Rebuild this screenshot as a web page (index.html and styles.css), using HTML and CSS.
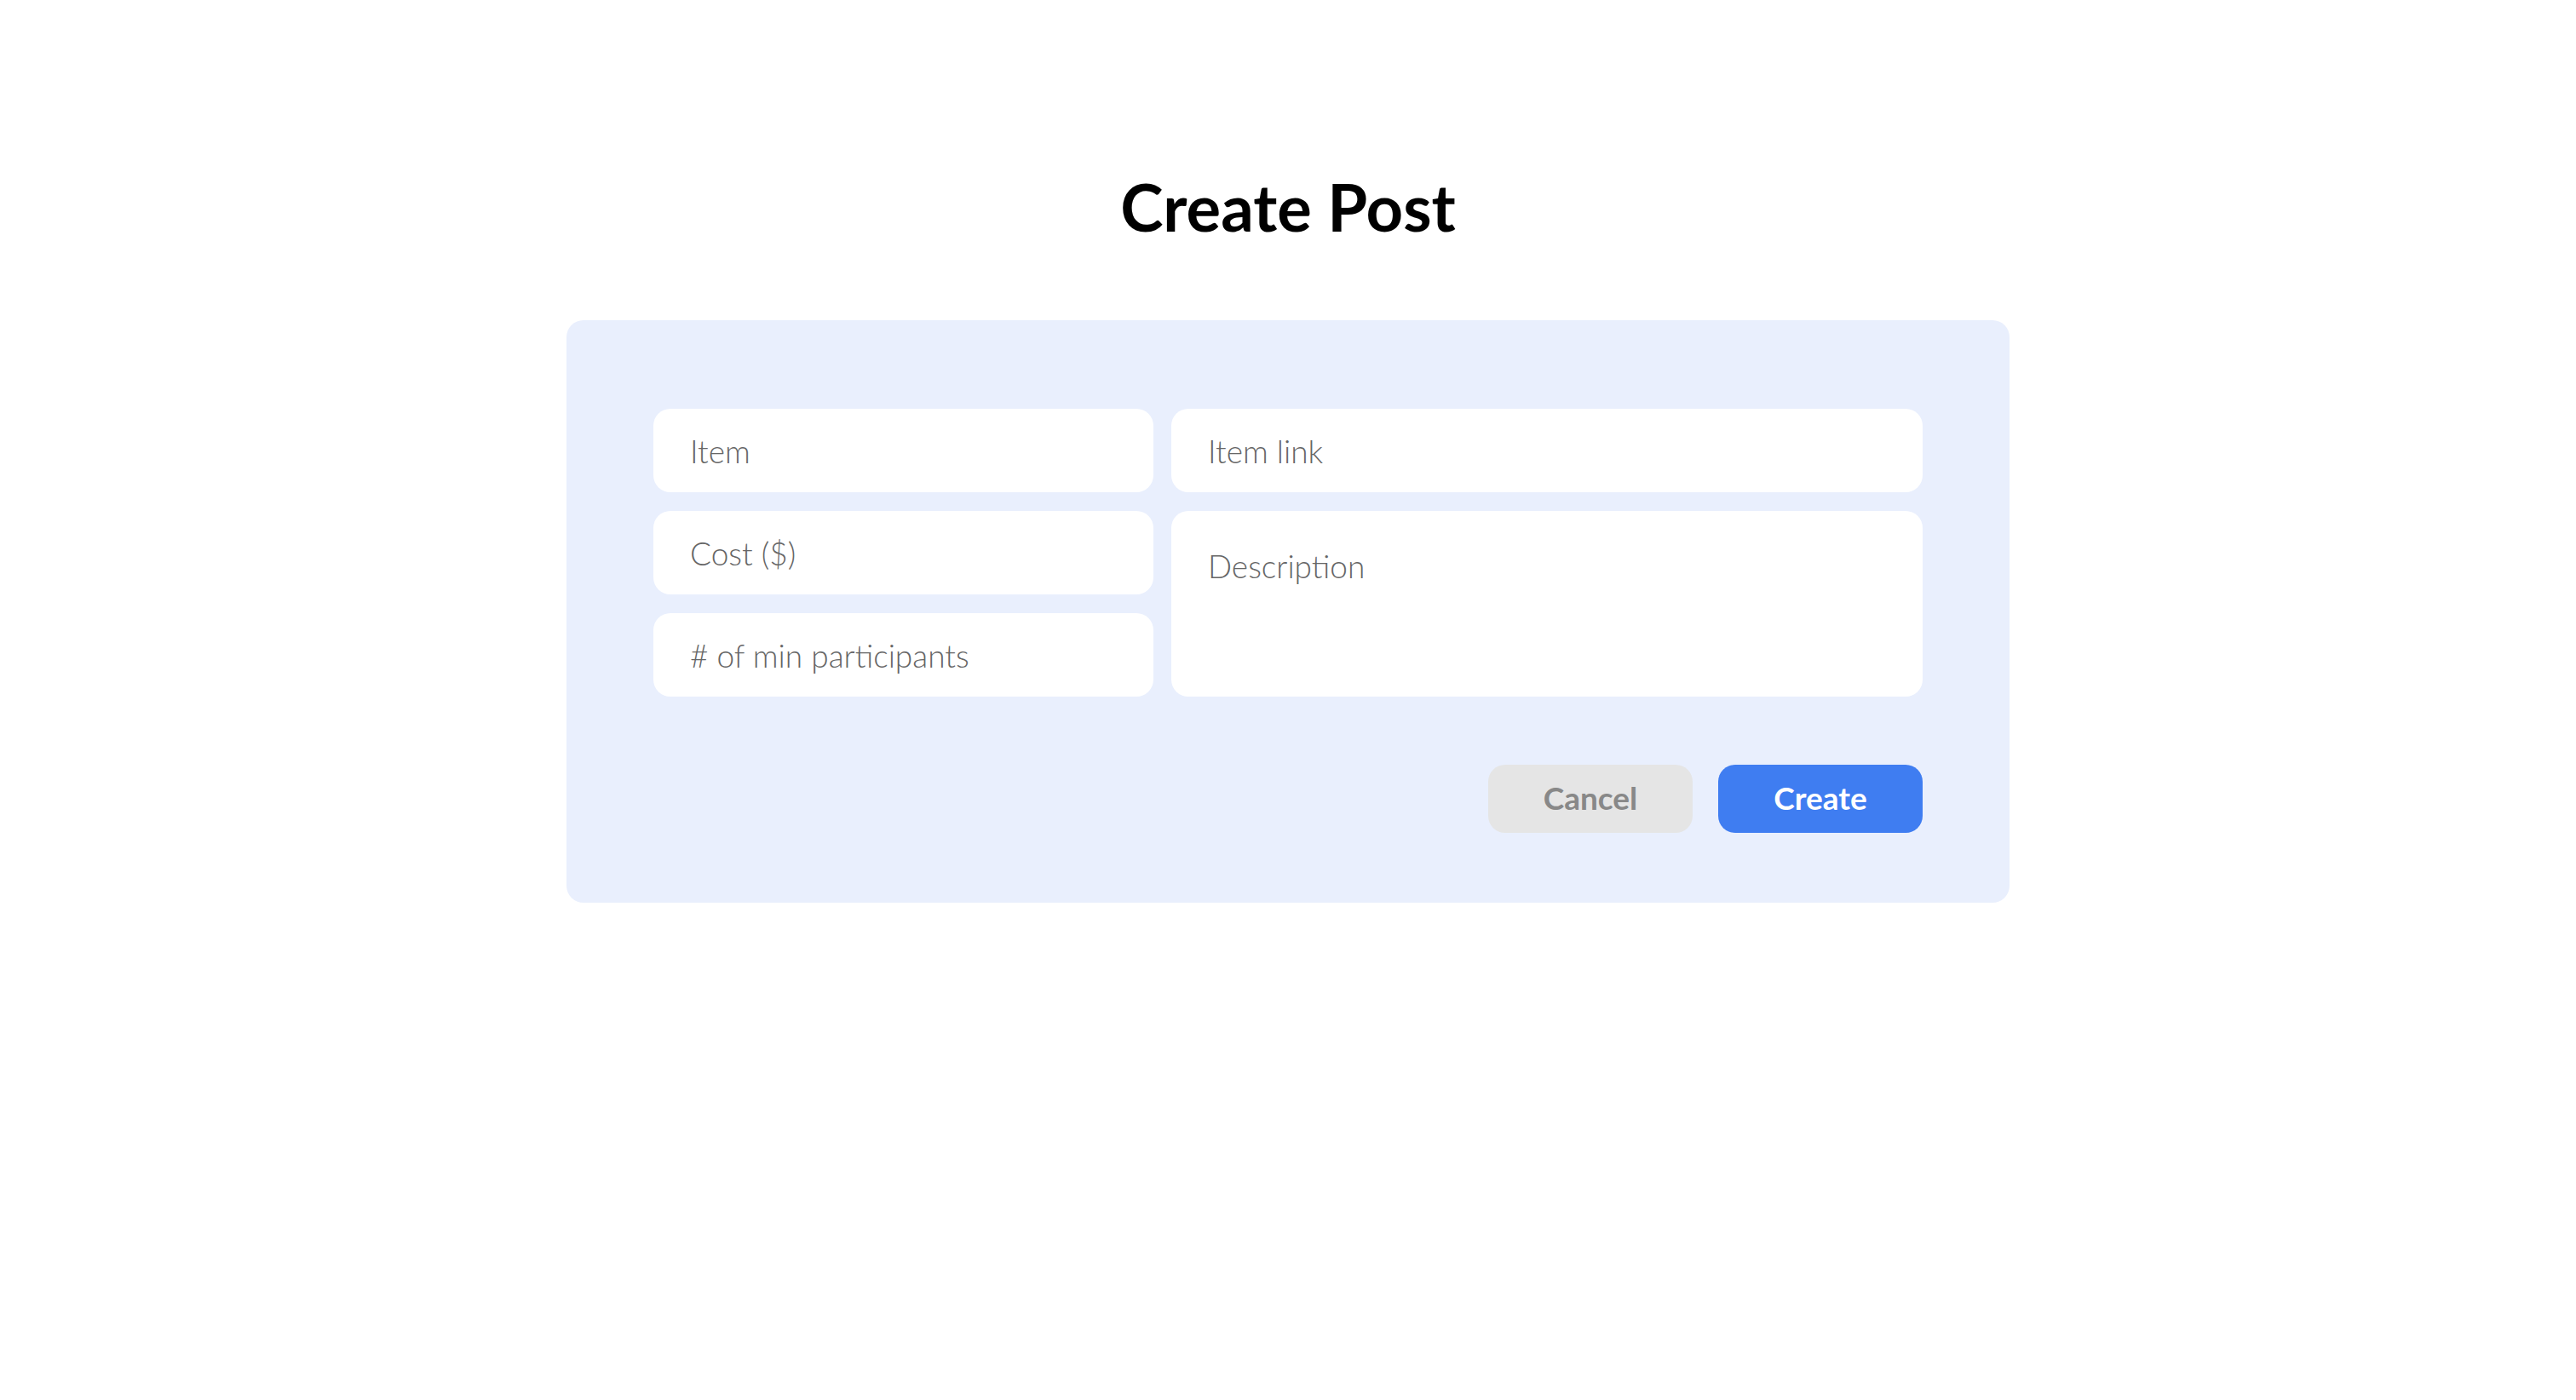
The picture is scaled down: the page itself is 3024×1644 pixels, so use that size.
FILE: index.html
```html
<!DOCTYPE html>
<html lang="en">
<head>
<meta charset="utf-8">
<title>Create Post</title>
<link rel="stylesheet" href="styles.css">
</head>
<body>
<main class="page">
  <h1 class="title">Create Post</h1>
  <section class="panel">
    <div class="form-grid">
      <div class="field field-item">Item</div>
      <div class="field field-link">Item link</div>
      <div class="field field-cost">Cost ($)</div>
      <div class="field field-desc">Description</div>
      <div class="field field-min"># of min participants</div>
    </div>
    <div class="actions">
      <button class="btn btn-cancel" type="button">Cancel</button>
      <button class="btn btn-create" type="button">Create</button>
    </div>
  </section>
</main>
</body>
</html>
```

FILE: styles.css
```css
html, body {
  margin: 0;
  padding: 0;
  background: #ffffff;
}

body {
  font-family: Lato, "Noto Sans", "Liberation Sans", sans-serif;
}

.page {
  display: flex;
  flex-direction: column;
  align-items: center;
  padding-top: 197px;
}

.title {
  margin: 0;
  font-size: 76px;
  font-weight: 700;
  line-height: 91px;
  color: #000000;
}

.panel {
  box-sizing: border-box;
  width: 1694px;
  margin-top: 88px;
  padding: 104px 102px 82px;
  background: #e9effd;
  border-radius: 20px;
}

.form-grid {
  display: grid;
  grid-template-columns: 587px 882px;
  grid-template-rows: 98px 98px 98px;
  column-gap: 21px;
  row-gap: 22px;
}

.field {
  box-sizing: border-box;
  background: #ffffff;
  border-radius: 20px;
  padding: 0 44px 0 43px;
  font-size: 37px;
  font-weight: 300;
  color: #666666;
  display: flex;
  align-items: center;
}

.field-item { grid-column: 1; grid-row: 1; }
.field-link { grid-column: 2; grid-row: 1; }
.field-cost { grid-column: 1; grid-row: 2; }
.field-min { grid-column: 1; grid-row: 3; }

.field-desc {
  grid-column: 2;
  grid-row: 2 / span 2;
  align-items: flex-start;
  padding-top: 42px;
}

.actions {
  display: flex;
  justify-content: flex-end;
  gap: 30px;
  margin-top: 80px;
}

.btn {
  width: 240px;
  height: 80px;
  border: none;
  border-radius: 20px;
  font-family: Lato, "Noto Sans", "Liberation Sans", sans-serif;
  font-size: 37px;
  font-weight: 700;
  padding: 0 0 4px;
  cursor: pointer;
}

.btn-cancel {
  background: #e5e5e5;
  color: #888888;
}

.btn-create {
  background: #3f7df1;
  color: #ffffff;
}
```
